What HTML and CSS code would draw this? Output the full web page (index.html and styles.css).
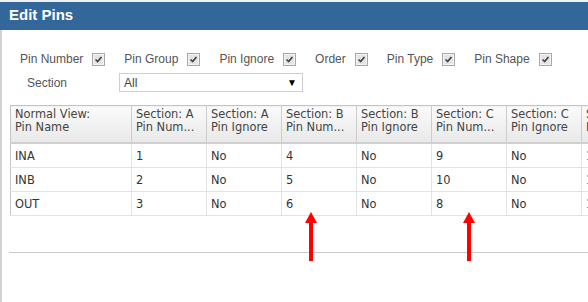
FILE: index.html
```html
<!DOCTYPE html>
<html lang="en">

<head>
  <meta charset="UTF-8">
  <meta name="viewport" content="width=device-width, initial-scale=1.0">
  <title>Edit Pins</title>
  <link rel="stylesheet" href="styles.css">
</head>

<body>
  <div class="topstrip"></div>
  <div class="titlebar">Edit Pins</div>
  <div class="content">
    <div class="filters">
      <label class="opt">Pin Number <span class="check"><svg viewBox="0 0 13 13"><path d="M3 6.5 L5.5 9 L10 3.5" /></svg></span></label>
      <label class="opt">Pin Group <span class="check"><svg viewBox="0 0 13 13"><path d="M3 6.5 L5.5 9 L10 3.5" /></svg></span></label>
      <label class="opt">Pin Ignore <span class="check"><svg viewBox="0 0 13 13"><path d="M3 6.5 L5.5 9 L10 3.5" /></svg></span></label>
      <label class="opt">Order <span class="check"><svg viewBox="0 0 13 13"><path d="M3 6.5 L5.5 9 L10 3.5" /></svg></span></label>
      <label class="opt">Pin Type <span class="check"><svg viewBox="0 0 13 13"><path d="M3 6.5 L5.5 9 L10 3.5" /></svg></span></label>
      <label class="opt">Pin Shape <span class="check"><svg viewBox="0 0 13 13"><path d="M3 6.5 L5.5 9 L10 3.5" /></svg></span></label>
    </div>
    <div class="section-row">
      <span class="section-label">Section</span>
      <div class="select"><span>All</span><span class="caret">&#9660;</span></div>
    </div>

    <div class="grid">
      <table class="pins">
        <colgroup>
          <col class="c-name">
          <col class="c-std"><col class="c-std"><col class="c-std">
          <col class="c-std"><col class="c-std"><col class="c-std"><col class="c-std">
        </colgroup>
        <thead>
          <tr>
            <th>Normal View:<br>Pin Name</th>
            <th>Section: A<br>Pin Num...</th>
            <th>Section: A<br>Pin Ignore</th>
            <th>Section: B<br>Pin Num...</th>
            <th>Section: B<br>Pin Ignore</th>
            <th>Section: C<br>Pin Num...</th>
            <th>Section: C<br>Pin Ignore</th>
            <th>Section: D<br>Pin Num...</th>
          </tr>
        </thead>
        <tbody>
          <tr><td>INA</td><td>1</td><td>No</td><td>4</td><td>No</td><td>9</td><td>No</td><td>11</td></tr>
          <tr><td>INB</td><td>2</td><td>No</td><td>5</td><td>No</td><td>10</td><td>No</td><td>12</td></tr>
          <tr><td>OUT</td><td>3</td><td>No</td><td>6</td><td>No</td><td>8</td><td>No</td><td>13</td></tr>
        </tbody>
      </table>
    </div>

    <!-- annotation arrows -->
    <svg class="arrow arrow-b" viewBox="0 0 12 50"><polygon points="6,0 12,11 0,11" /><rect x="4" y="10" width="4" height="39" /></svg>
    <svg class="arrow arrow-c" viewBox="0 0 12 50"><polygon points="6,0 12,11 0,11" /><rect x="4" y="10" width="4" height="39" /></svg>
  </div>
</body>

</html>
```

FILE: styles.css
```css
body {
  margin: 0;
  font-family: "Liberation Sans", Arial, sans-serif;
  background: #fff;
  overflow: hidden;
}

.topstrip {
  height: 2px;
  background: #eef1f4;
}

.titlebar {
  height: 28px;
  line-height: 25px;
  padding-left: 9px;
  background: #336699;
  color: #fff;
  font-weight: bold;
  font-size: 15px;
}

.content {
  position: relative;
  height: 272px;
  border-left: 2px solid #d2d2d2;
}

.filters {
  display: flex;
  gap: 19px;
  padding: 22px 0 0 18px;
}

.opt {
  display: flex;
  align-items: center;
  gap: 9px;
  font-size: 12px;
  color: #555;
  height: 14px;
}

.check {
  width: 11px;
  height: 11px;
  border: 1px solid #a8a8a8;
  background: #e4e4e4;
  box-shadow: inset 0 0 0 1px #f4f4f4;
}

.check svg {
  display: block;
  width: 11px;
  height: 11px;
}

.check path {
  fill: none;
  stroke: #444;
  stroke-width: 2;
}

.section-row {
  display: flex;
  align-items: center;
  margin-top: 7px;
  padding-left: 25px;
  height: 19px;
}

.section-label {
  width: 92px;
  font-size: 12px;
  color: #555;
}

.select {
  display: flex;
  justify-content: space-between;
  align-items: center;
  box-sizing: border-box;
  width: 184px;
  height: 19px;
  padding: 0 5px 0 4px;
  border: 1px solid #cfcfcf;
  font-size: 12px;
  color: #444;
}

.caret {
  font-size: 10px;
  color: #000;
}

.grid {
  margin: 13px 0 0 7px;
  height: 147px;
  padding-left: 1px;
  border-bottom: 1px solid #c8c8c8;
  overflow: hidden;
}

.pins {
  table-layout: fixed;
  width: 645px;
  border-collapse: collapse;
  font-family: "DejaVu Sans", Verdana, sans-serif;
  font-size: 11.4px;
  color: #333;
}

.c-name {
  width: 121px;
}

.c-std {
  width: 75px;
}

.pins th {
  height: 34px;
  padding: 2px 4px 0;
  text-align: left;
  vertical-align: top;
  font-weight: normal;
  line-height: 13px;
  color: #444;
  white-space: nowrap;
  overflow: hidden;
  background: linear-gradient(#fbfbfb, #e9e9e9);
  border: 1px solid #cdcdcd;
  border-top-color: #c4c4c4;
  border-bottom: 2px solid #d0d0d0;
}

.pins td {
  height: 23px;
  padding: 0 4px;
  border: 1px solid #e3e3e3;
  border-left-color: #dcdcdc;
  white-space: nowrap;
}

.pins td:first-child,
.pins th:first-child {
  border-left-color: #c4c4c4;
}

.arrow {
  position: absolute;
  width: 12px;
  height: 50px;
  top: 182px;
  fill: #f00;
}

.arrow-b {
  left: 303px;
}

.arrow-c {
  left: 461px;
}
```
